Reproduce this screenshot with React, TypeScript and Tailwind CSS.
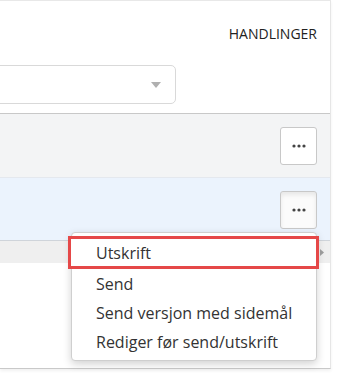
import React from 'react';

const Dots: React.FC = () => (
  <svg width="14" height="4" viewBox="0 0 14 4" className="block">
    <circle cx="2" cy="2" r="1.6" fill="#444" />
    <circle cx="7" cy="2" r="1.6" fill="#444" />
    <circle cx="12" cy="2" r="1.6" fill="#444" />
  </svg>
);

const menuItems = ['Send', 'Send versjon med sidemål', 'Rediger før send/utskrift'];

export default function App() {
  return (
    <div className="w-[338px] h-[375px] bg-white overflow-hidden font-['Open_Sans',sans-serif] text-[#333]">
      <div className="w-[331px] h-[369px] border-t border-r border-b border-t-[#e8e8e8] border-r-[#e6e6e6] border-b-[#c9c9c9] shadow-[0_2px_3px_rgba(0,0,0,0.06)] flex flex-col">
        {/* Header */}
        <div className="h-[113px] pt-[23px] border-b border-[#c8c8c8]">
          <div className="flex justify-end pr-[13px]">
            <span className="text-[14px] leading-[19px] font-medium text-[#222]">HANDLINGER</span>
          </div>
          <div className="mt-[22px] -ml-[10px] w-[186px] h-[39px] border border-[#d9d9d9] rounded-[5px] bg-white flex items-center justify-end pr-[14px]">
            <svg width="10" height="6" viewBox="0 0 10 6">
              <path d="M0 0 L10 0 L5 6 Z" fill="#b0b0b0" />
            </svg>
          </div>
        </div>

        {/* Row 1 */}
        <div className="h-[64px] bg-[#f3f4f5] border-b border-[#e4e8ee] flex justify-end pt-[13px] pr-[13px]">
          <button className="w-[37px] h-[38px] bg-white border border-[#c8c8c8] rounded-[3px] flex items-center justify-center">
            <Dots />
          </button>
        </div>

        {/* Row 2 */}
        <div className="h-[63px] bg-[#ebf3fd] border-b border-[#cfd4da] flex justify-end pt-[13px] pr-[13px]">
          <div className="relative">
            <button className="w-[37px] h-[38px] bg-[#fbfbfb] border border-[#c8c8c8] rounded-[3px] shadow-[inset_0_3px_4px_rgba(0,0,0,0.08)] flex items-center justify-center">
              <Dots />
            </button>
            <div className="absolute right-0 top-[41px] w-[246px] bg-white border border-[#cfcfcf] rounded-[4px] shadow-[0_3px_8px_rgba(0,0,0,0.18)] pt-[3px] pb-[4px] z-10">
              <div className="relative -ml-[4px] -mr-[3px] h-[33px] border-[3px] border-[#e54848] flex items-center pl-[25px] text-[16px] bg-white">
                Utskrift
                <svg width="4" height="7" viewBox="0 0 4 7" className="absolute right-[-8px] top-[10px]">
                  <path d="M0 0 L4 3.5 L0 7 Z" fill="#9a9a9a" />
                </svg>
              </div>
              {menuItems.map((t) => (
                <div key={t} className="h-[29px] flex items-center pl-[24px] text-[16px] leading-[20px]">
                  {t}
                </div>
              ))}
            </div>
          </div>
        </div>

        {/* Footer band */}
        <div className="h-[22px] bg-[#efefef]" />
        <div className="flex-1 bg-white" />
      </div>
    </div>
  );
}
